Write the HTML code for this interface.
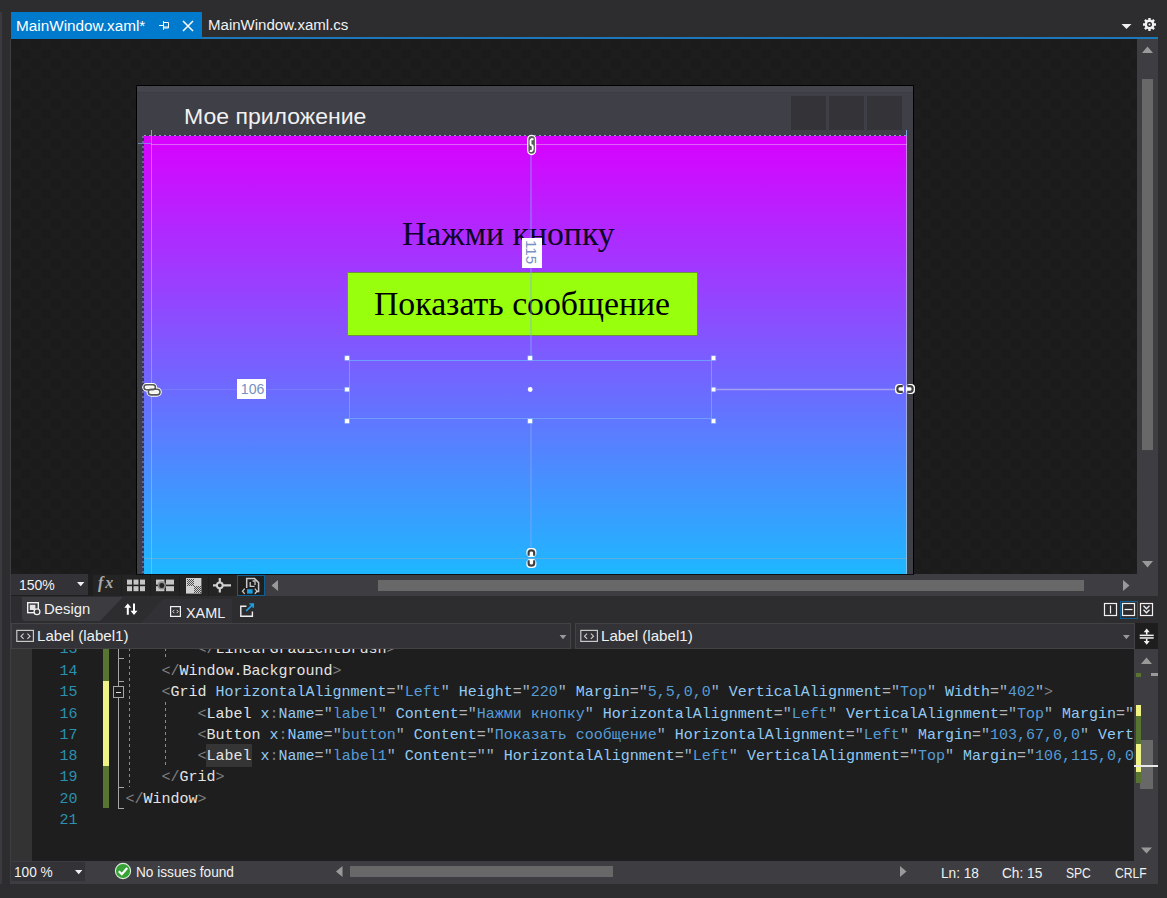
<!DOCTYPE html>
<html lang="ru">
<head>
<meta charset="utf-8">
<title>MainWindow.xaml</title>
<style>
html,body{margin:0;padding:0;}
body{position:relative;width:1167px;height:898px;overflow:hidden;background:#2d2d30;
  font-family:"Liberation Sans",sans-serif;font-size:15px;color:#f1f1f1;}
.a{position:absolute;}
.t{position:absolute;white-space:nowrap;line-height:20px;height:20px;}
svg{position:absolute;overflow:visible;}
/* ---------- tab strip ---------- */
#tab1{left:11px;top:12px;width:191px;height:27px;background:#007acc;}
#tabline{left:11px;top:37px;width:1147px;height:2px;background:#1b78ba;}
/* ---------- designer ---------- */
#design{left:11px;top:39px;width:1126px;height:535px;overflow:hidden;background-color:#1b1b1b;
  background-image:linear-gradient(45deg,#1d1d1d 25%,transparent 25%,transparent 75%,#1d1d1d 75%),
                   linear-gradient(45deg,#1d1d1d 25%,transparent 25%,transparent 75%,#1d1d1d 75%);
  background-size:20px 20px;background-position:0 0,10px 10px;}
#win{left:125px;top:46px;width:778px;height:520px;background:#3f3f48;border:1px solid #000;box-sizing:border-box;}
#grad{left:132.500px;top:97px;width:763.500px;height:440px;background:linear-gradient(to bottom,#d901ff 0px,#1eb7ff 438px);}
.cap{position:absolute;top:57px;width:35px;height:34px;background:#333338;}
.sb{background:#3e3e42;}
.th{background:#686868;}
/* ---------- editor ---------- */
#editor{left:11px;top:649px;width:1123px;height:212px;background:#1e1e1e;overflow:hidden;}
#code{font-family:"Liberation Mono",monospace;font-size:15px;color:#dcdcdc;}
.ln{position:absolute;left:114.500px;white-space:pre;height:21px;line-height:21px;}
.num{position:absolute;left:20px;width:46.400px;text-align:right;color:#2b91af;height:21px;line-height:21px;}
.d{color:#808080}.e{color:#e4e4e4}.n{color:#92caf4}.v{color:#569cd6}.q{color:#9fb6cc}.p{color:#b4b4b4}
.combo{position:absolute;top:623px;height:26px;background:#333337;border:1px solid #434346;box-sizing:border-box;}
</style>
</head>
<body>
<!-- TAB STRIP -->
<div class="a" id="tabline"></div>
<div class="a" id="tab1"></div>
<div class="t" id="tx1" style="left:15.71px;top:16.0px;color:#fff;font-size:15.5px;transform:scaleX(0.9876);transform-origin:0 50%;">MainWindow.xaml*</div>
<div class="t" id="tx2" style="left:207.55px;top:15.0px;font-size:15.5px;transform:scaleX(0.9699);transform-origin:0 50%;">MainWindow.xaml.cs</div>
<svg id="pin" style="left:158px;top:20px" width="12" height="11" viewBox="0 0 12 11"><path d="M1 5.5H5M5.5 1V10M6 2.5H10.5V8H6M6 7H10.5" fill="none" stroke="#fff" stroke-width="1"/></svg>
<svg id="cls" style="left:182px;top:21px" width="12" height="10" viewBox="0 0 12 10"><path d="M1 0L11 10M11 0L1 10" fill="none" stroke="#fff" stroke-width="1.5"/></svg>
<svg id="dd" style="left:1121px;top:24px" width="11" height="6" viewBox="0 0 11 6"><path d="M0.5 0H10.5L5.5 5Z" fill="#f1f1f1"/></svg>
<svg id="gear" style="left:1143px;top:18px" width="13" height="13" viewBox="0 0 13 13"><circle cx="6.5" cy="6.5" r="3.6" fill="none" stroke="#f1f1f1" stroke-width="2.6"/><g stroke="#f1f1f1" stroke-width="2.4"><path d="M6.5 0V13M0 6.5H13M1.9 1.9L11.1 11.1M11.1 1.9L1.9 11.1" stroke-dasharray="2.2 8.6 2.2"/></g><circle cx="6.5" cy="6.5" r="2.4" fill="#2d2d30"/><circle cx="6.5" cy="6.5" r="1" fill="#f1f1f1"/></svg>

<!-- DESIGNER -->
<div class="a" id="design">
  <div class="a" id="win"><div class="a" style="left:0;top:0;width:776px;height:6px;background:#44444c;"></div><div class="a" style="left:0;top:6px;width:776px;height:1px;background:#3b3b43;"></div></div>
  <div class="cap" style="left:780px"></div><div class="cap" style="left:818px"></div><div class="cap" style="left:856px"></div>
  <div class="t" id="title" style="left:173.100px;top:65px;font-size:22.500px;line-height:26px;height:26px;transform:scaleX(1.023);transform-origin:0 50%;">Мое приложение</div>
  <div class="a" id="grad"></div>
  <div class="t" id="lbl" style="left:391px;top:173px;font-family:'Liberation Serif',serif;font-size:33.75px;line-height:44px;height:44px;color:#0e0226;">Нажми кнопку</div>
  <div class="a" id="btn" style="left:336px;top:233px;width:351px;height:64px;box-sizing:border-box;background:#98ff0c;border:1px solid #6f8f3c;"></div>
  <div class="t" id="btntx" style="left:363px;top:243px;font-family:'Liberation Serif',serif;font-size:33.75px;line-height:44px;height:44px;color:#000;">Показать сообщение</div>
  <svg id="ad" style="left:0;top:0" width="1126" height="535" viewBox="11 39 1126 535" shape-rendering="crispEdges">
    <!-- dotted window content border -->
    <path d="M144 135.500H907" stroke="#1c1c78" stroke-opacity=".25" stroke-width="1" fill="none"/>
    <path d="M144 135.500H907" stroke="#cdbcff" stroke-opacity=".7" stroke-width="1" stroke-dasharray="2 3" fill="none"/>
    <path d="M143 136V574" stroke="#1c1c78" stroke-opacity=".5" stroke-width="1" fill="none" shape-rendering="auto"/>
    <path d="M143 136V574" stroke="#cdbcff" stroke-opacity=".7" stroke-width="1" stroke-dasharray="2 3" fill="none" shape-rendering="auto"/>
    <!-- grid rails -->
    <path d="M151.5 136V574" stroke="#c4c4c4" stroke-opacity=".5" stroke-width="1" fill="none"/>
    <path d="M906.5 136V574" stroke="#c8c8d0" stroke-opacity=".62" stroke-width="1" fill="none"/>
    <path d="M151 144.5H907" stroke="#e8e8e8" stroke-opacity=".42" stroke-width="1" fill="none"/>
    <path d="M144 558.5H907" stroke="#b0b0b0" stroke-opacity=".4" stroke-width="1" fill="none"/>
    <path d="M138 143.5H151" stroke="#7fa4e4" stroke-opacity=".7" stroke-width="1" fill="none"/><path d="M151.500 130V136M906.500 130V136" stroke="#7fa4e4" stroke-width="1" fill="none"/>
    <!-- margin lines -->
    <path d="M531 155V356M531 422V548" stroke="#86a8ff" stroke-opacity=".55" stroke-width="1.4" fill="none" shape-rendering="auto"/>
    <path d="M162 389.5H345" stroke="#9db8ff" stroke-opacity=".22" stroke-width="1" fill="none"/>
    <path d="M716 389.5H895" stroke="#d0d0e0" stroke-opacity=".55" stroke-width="1.5" fill="none" shape-rendering="auto"/>
    <!-- selection rect -->
    <rect x="349.5" y="360.5" width="362" height="58" fill="none" stroke="#6f9cff" stroke-width="1"/>
    <g fill="#ffffff" stroke="#7aa2f0" stroke-width="0.6" shape-rendering="auto">
      <rect x="344.8" y="355.8" width="4.6" height="4.6"/><rect x="527.8" y="355.8" width="4.6" height="4.6"/><rect x="711.2" y="355.8" width="4.6" height="4.6"/>
      <rect x="344.8" y="387.2" width="4.6" height="4.6"/><rect x="711.2" y="387.2" width="4.6" height="4.6"/>
      <rect x="344.8" y="418.8" width="4.6" height="4.6"/><rect x="527.8" y="418.8" width="4.6" height="4.6"/><rect x="711.2" y="418.8" width="4.6" height="4.6"/>
      <circle cx="530.2" cy="389.5" r="2.4" stroke="none"/>
    </g>
    <!-- value boxes -->
    <rect x="237" y="379" width="29" height="20" fill="#ffffff"/>
    <rect x="522" y="238" width="20" height="30" fill="#ffffff"/>
    <!-- chain icons -->
    <g shape-rendering="auto" fill="none">
      <g id="chainL">
        <rect x="144" y="384.700" width="11.400" height="5" rx="2.500" stroke="#ffffff" stroke-width="3.600" fill="#f4f4f0"/>
        <rect x="148.300" y="389.200" width="11.700" height="5.700" rx="2.850" stroke="#ffffff" stroke-width="3.600" fill="#f4f4f0"/>
        <rect x="144" y="384.700" width="11.400" height="5" rx="2.500" stroke="#585858" stroke-width="1.600"/>
        <rect x="148.300" y="389.200" width="11.700" height="5.700" rx="2.850" stroke="#585858" stroke-width="1.600"/>
      </g>
      <g id="chainT">
        <rect x="527.700" y="135.300" width="7.800" height="19.200" rx="3.900" stroke="#ffffff" stroke-width="1.300" fill="#595959"/>
        <path d="M533.400 139.800Q531.200 138 530.500 140.600V144Q530.500 145.300 531.600 145.300Q532.700 145.300 532.700 146.600V149.600Q532 152 529.900 150.600" stroke="#ffffff" stroke-width="1.900"/>
      </g>
      <g id="chainR">
        <rect x="896" y="385" width="7" height="8" rx="2.800" stroke="#ffffff" stroke-width="2" fill="#ffffff"/>
        <path d="M902.800 386.200H899.800Q897.300 386.200 897.300 389Q897.300 391.800 899.800 391.800H902.800" stroke="#404040" stroke-width="2.200"/>
        <rect x="907" y="385" width="7" height="8" rx="2.800" stroke="#ffffff" stroke-width="2" fill="#ffffff"/>
        <path d="M907.200 386.200H910.200Q912.700 386.200 912.700 389Q912.700 391.800 910.200 391.800H907.200" stroke="#404040" stroke-width="2.200"/>
      </g>
      <g id="chainB">
        <rect x="527.400" y="549" width="8" height="7" rx="2.800" stroke="#ffffff" stroke-width="2" fill="#ffffff"/>
        <path d="M528.600 555.800V552.800Q528.600 550.300 531.400 550.300Q534.200 550.300 534.200 552.800V555.800" stroke="#404040" stroke-width="2.200"/>
        <rect x="527.400" y="560" width="8" height="7" rx="2.800" stroke="#ffffff" stroke-width="2" fill="#ffffff"/>
        <path d="M528.600 560.200V563.200Q528.600 565.700 531.400 565.700Q534.200 565.700 534.200 563.200V560.200" stroke="#404040" stroke-width="2.200"/>
      </g>
    </g>
  </svg>
  <div class="t" id="v106" style="left:227.5px;top:340px;width:29px;text-align:center;color:#7890c4;font-size:15px;transform:scaleX(0.9417);transform-origin:0 50%;">106</div>
  <div class="t" id="v115" style="left:505.200px;top:203px;width:30px;text-align:center;color:#7890c4;font-size:15.500px;transform:rotate(90deg) scaleX(0.98);transform-origin:50% 50%;">115</div>
</div>
<!-- designer scrollbars -->
<div class="a sb" style="left:1137px;top:39px;width:21px;height:557px;"></div>
<div class="a th" style="left:1142px;top:79px;width:11px;height:371px;"></div>
<div class="a" style="left:11px;top:574px;width:1147px;height:22px;background:#1e1e1e;"></div>
<div class="a sb" style="left:265px;top:574px;width:893px;height:22px;"></div>
<div class="a th" style="left:378px;top:580px;width:706px;height:11px;"></div>
<svg style="left:1137px;top:39px" width="21" height="557" viewBox="1137 39 21 557">
  <path d="M1142 53H1153L1147.5 46.5Z M1142 561H1153L1147.5 567.5Z" fill="#999999"/>
</svg>
<svg style="left:265px;top:574px" width="872" height="22" viewBox="265 574 872 22">
  <path d="M278 580V591L271.5 585.5Z M1123 580V591L1129.5 585.5Z" fill="#999999"/>
</svg>
<div class="a" style="left:136px;top:574px;width:778px;height:1px;background:#0c1014;"></div>
<!-- designer toolbar -->
<div class="a" style="left:11px;top:574px;width:77px;height:21px;background:#333337;"></div>
<div class="t" id="z150" style="left:18.86px;top:575.0px;font-size:15px;transform:scaleX(0.9329);transform-origin:0 50%;">150%</div>
<svg style="left:77px;top:582px" width="8" height="5" viewBox="0 0 8 5"><path d="M0 0H7.4L3.7 4.2Z" fill="#f1f1f1"/></svg>
<div class="a" style="left:93px;top:575px;width:28px;height:21px;background:#242425;"></div>
<div class="a" style="left:122px;top:575px;width:28px;height:21px;background:#242425;"></div>
<div class="a" style="left:151px;top:575px;width:28px;height:21px;background:#242425;"></div>
<div class="a" style="left:180px;top:575px;width:28px;height:21px;background:#242425;"></div>
<div class="a" style="left:209px;top:575px;width:28px;height:21px;background:#242425;"></div>
<div class="a" style="left:237px;top:575px;width:28px;height:21px;background:#1f1f20;border:1px solid #0f5f95;box-sizing:border-box;"></div>
<div class="t" id="fx" style="left:98px;top:572px;font-family:'Liberation Serif',serif;font-style:italic;font-weight:bold;font-size:16px;letter-spacing:2px;line-height:22px;height:22px;color:#aaaaaa;">fx</div>
<svg id="tbicons" style="left:120px;top:574px" width="150" height="22" viewBox="120 574 150 22">
  <g fill="#c6c6c6">
    <rect x="127" y="579.6" width="5" height="5"/><rect x="133.5" y="579.6" width="5" height="5"/><rect x="140" y="579.6" width="5" height="5"/>
    <rect x="127" y="586.2" width="5" height="5"/><rect x="133.5" y="586.2" width="5" height="5"/><rect x="140" y="586.2" width="5" height="5"/>
    <rect x="156" y="579.6" width="8.4" height="5"/><rect x="166" y="579.6" width="8" height="5"/>
    <rect x="156" y="586.2" width="8.4" height="5"/><rect x="166" y="586.2" width="8" height="5"/>
    <rect x="186" y="578" width="15.4" height="15.6" fill="#d2d2d2"/>
  </g>
  <circle cx="161.800" cy="585.400" r="3.300" fill="#242425" stroke="#8a8a8a" stroke-width="1.600"/>
  <g stroke="#505050" stroke-width="1" stroke-dasharray="1 1" fill="none" shape-rendering="crispEdges"><path d="M187 579.5H194M188 580.5H194M187 581.5H194M188 582.5H194M187 583.5H194M188 584.5H194M187 585.5H194M194 586.5H201M195 587.5H201M194 588.5H201M195 589.5H201M194 590.5H201M195 591.5H201M194 592.5H201"/></g>
  <g stroke="#d0d0d0" stroke-width="2.2" fill="none"><path d="M213 585.3H231M219.800 578V592.6"/></g>
  <circle cx="219.800" cy="585.3" r="2.9" fill="#242425" stroke="#d0d0d0" stroke-width="2"/>
  <g stroke="#c8c8c8" stroke-width="1.5" fill="none">
    <path d="M246.7 588V578.6H254.500L258.600 582.6V591.6H256"/>
    <path d="M250.200 582V586.400H254.600M252.600 581H255V585" stroke-width="1.3"/>
    <path d="M244.700 588.6L242.500 591.2L244.700 593.800M254.800 588.6L257 591.2L254.800 593.800" stroke-width="1.3"/>
  </g>
  <rect x="247" y="589.2" width="5.6" height="4.4" fill="#1ba1e2"/>
</svg>
<!-- design/xaml tab row -->
<svg id="tabrow" style="left:11px;top:596px" width="1147" height="27" viewBox="11 596 1147 27">
  <path d="M22 597H123L100 621H25Q22 621 22 618Z" fill="#3b3b40"/>
  <path d="M163 599H232V623H141Z" fill="#323236"/>
  <g fill="none" stroke="#f1f1f1" stroke-width="1.4">
    <rect x="27.700" y="602.700" width="10.600" height="10"/>
    <rect x="170.600" y="606.6" width="9.800" height="9.800" stroke-width="1.2"/>
    <path d="M246.400 606.200H240.800V616.200H252.400V611.400" stroke-width="1.4"/>
    <rect x="1104.500" y="603.500" width="12" height="12" stroke-width="1.2"/><path d="M1110.500 605.500V613.500" stroke-width="1.2"/>
    <rect x="1122.500" y="603.500" width="12" height="12" stroke-width="1.2"/><path d="M1124.500 609.500H1132.500" stroke-width="1.2"/>
    <rect x="1140.500" y="603.500" width="12" height="12" stroke-width="1.2"/><path d="M1143.500 605.800L1146.500 608.800L1149.500 605.800M1143.500 609.800L1146.500 612.800L1149.500 609.800" stroke-width="1.300"/>
  </g>
  <rect x="1120.500" y="601.500" width="17" height="17" fill="none" stroke="#0f5f95" stroke-width="1"/>
  <rect x="29.800" y="604.800" width="5.600" height="5.200" fill="#e4e4e4"/>
  <circle cx="37" cy="611.700" r="2.900" fill="#3b3b40" stroke="#f1f1f1" stroke-width="1.300"/>
  <path d="M127.800 603.4L124.300 607.700H126.800V614.800H128.800V607.700H131.300Z M134 615L130.500 610.700H133V603.600H135V610.700H137.500Z" fill="#ffffff"/>
  <path d="M174.300 609.900L172.800 611.500L174.300 613.100M176.700 609.900L178.200 611.500L176.700 613.100" fill="none" stroke="#f1f1f1" stroke-width="0.9"/>
  <path d="M246.200 611L252.600 604.600M249.400 604H253.200V607.800" fill="none" stroke="#1ba1e2" stroke-width="1.700"/>
</svg>
<div class="t" id="tdesign" style="left:44.08px;top:599.0px;font-size:15.5px;transform:scaleX(0.9574);transform-origin:0 50%;">Design</div>
<div class="t" id="txaml" style="left:185.98px;top:603.0px;font-size:15px;transform:scaleX(0.96);transform-origin:0 50%;">XAML</div>
<!-- combo boxes -->
<div class="combo" style="left:11px;width:560px;"></div>
<div class="combo" style="left:575px;width:560px;"></div>
<div class="a" style="left:1135px;top:623px;width:23px;height:26px;background:#1e1e1e;"></div>
<svg id="comboic" style="left:11px;top:623px" width="1147" height="26" viewBox="11 623 1147 26">
  <g fill="none" stroke="#c8c8c8" stroke-width="1.2">
    <rect x="16.800" y="630.400" width="16.600" height="11"/><path d="M23.600 633.600L21 636.200L23.600 638.800M27.400 633.600L30 636.200L27.400 638.800"/>
    <rect x="580.800" y="630.400" width="16.600" height="11"/><path d="M587.100 633.600L584.500 636.200L587.100 638.800M590.900 633.600L593.500 636.200L590.900 638.800"/>
  </g>
  <path d="M559.600 635H566.400L563 639.200Z M1123 635H1129.800L1126.400 639.200Z" fill="#999999"/>
  <g fill="#f1f1f1"><rect x="1139.700" y="634.600" width="14" height="1.500"/><rect x="1139.700" y="637.200" width="14" height="1.500"/>
  <path d="M1146.700 628.500L1149.700 632.200H1147.500V634.600H1145.900V632.200H1143.700Z M1146.700 644.800L1149.700 641.100H1147.500V638.700H1145.900V641.100H1143.700Z"/></g>
</svg>
<div class="t" id="cb1" style="left:36.52px;top:626.0px;font-size:15px;transform:scaleX(1.0073);transform-origin:0 50%;">Label (label1)</div>
<div class="t" id="cb2" style="left:600.66px;top:626.0px;font-size:15px;transform:scaleX(1.009);transform-origin:0 50%;">Label (label1)</div>
<!-- EDITOR -->
<div class="a" id="editor">
<div class="a" style="left:0;top:0;width:21px;height:212px;background:#333333;"></div>
<div class="a" style="left:92px;top:0;width:6px;height:32.300px;background:#577430;"></div>
<div class="a" style="left:92px;top:32.300px;width:6px;height:85px;background:#eff284;"></div>
<div class="a" style="left:92px;top:117.300px;width:6px;height:42px;background:#577430;"></div>
<svg id="outl" style="left:0;top:0" width="200" height="212" viewBox="11 649 200 212" shape-rendering="crispEdges">
  <path d="M118.500 648V808.500H124M118.500 658.500H124M118.500 681.500H124M118.500 787.500H124" fill="none" stroke="#a5a5a5" stroke-width="1"/>
  <rect x="113.500" y="686.500" width="10" height="11" fill="#1e1e1e" stroke="#a5a5a5" stroke-width="1"/>
  <path d="M116 692.500H121" stroke="#e0e0e0" stroke-width="1"/>
  <path d="M129.500 648V787M165.500 648V660M165.500 702V766" fill="none" stroke="#8a8a8a" stroke-width="1" stroke-dasharray="3 3"/>
</svg>
<div class="a" style="left:195px;top:95px;width:45.500px;height:23px;background:#353535;"></div>
<div id="code">
<div class="num" style="top:-9.60px">13</div><div class="ln" style="top:-9.60px">        <span class="d">&lt;/</span><span class="e">LinearGradientBrush</span><span class="d">&gt;</span></div>
<div class="num" style="top:11.73px">14</div><div class="ln" style="top:11.73px">    <span class="d">&lt;/</span><span class="e">Window.Background</span><span class="d">&gt;</span></div>
<div class="num" style="top:33.07px">15</div><div class="ln" style="top:33.07px">    <span class="d">&lt;</span><span class="e">Grid</span> <span class="n">HorizontalAlignment</span><span class="p">=</span><span class="q">"</span><span class="v">Left</span><span class="q">"</span> <span class="n">Height</span><span class="p">=</span><span class="q">"</span><span class="v">220</span><span class="q">"</span> <span class="n">Margin</span><span class="p">=</span><span class="q">"</span><span class="v">5,5,0,0</span><span class="q">"</span> <span class="n">VerticalAlignment</span><span class="p">=</span><span class="q">"</span><span class="v">Top</span><span class="q">"</span> <span class="n">Width</span><span class="p">=</span><span class="q">"</span><span class="v">402</span><span class="q">"</span><span class="d">&gt;</span></div>
<div class="num" style="top:55.10px">16</div><div class="ln" style="top:55.10px">        <span class="d">&lt;</span><span class="e">Label</span> <span class="n">x</span><span class="d">:</span><span class="n">Name</span><span class="p">=</span><span class="q">"</span><span class="v">label</span><span class="q">"</span> <span class="n">Content</span><span class="p">=</span><span class="q">"</span><span class="v">Нажми кнопку</span><span class="q">"</span> <span class="n">HorizontalAlignment</span><span class="p">=</span><span class="q">"</span><span class="v">Left</span><span class="q">"</span> <span class="n">VerticalAlignment</span><span class="p">=</span><span class="q">"</span><span class="v">Top</span><span class="q">"</span> <span class="n">Margin</span><span class="p">=</span><span class="q">"</span></div>
<div class="num" style="top:75.73px">17</div><div class="ln" style="top:75.73px">        <span class="d">&lt;</span><span class="e">Button</span> <span class="n">x</span><span class="d">:</span><span class="n">Name</span><span class="p">=</span><span class="q">"</span><span class="v">button</span><span class="q">"</span> <span class="n">Content</span><span class="p">=</span><span class="q">"</span><span class="v">Показать сообщение</span><span class="q">"</span> <span class="n">HorizontalAlignment</span><span class="p">=</span><span class="q">"</span><span class="v">Left</span><span class="q">"</span> <span class="n">Margin</span><span class="p">=</span><span class="q">"</span><span class="v">103,67,0,0</span><span class="q">"</span> <span class="n">Vert</span></div>
<div class="num" style="top:97.07px">18</div><div class="ln" style="top:97.07px">        <span class="d">&lt;</span><span class="e">Label</span> <span class="n">x</span><span class="d">:</span><span class="n">Name</span><span class="p">=</span><span class="q">"</span><span class="v">label1</span><span class="q">"</span> <span class="n">Content</span><span class="p">=</span><span class="q">"</span><span class="q">"</span> <span class="n">HorizontalAlignment</span><span class="p">=</span><span class="q">"</span><span class="v">Left</span><span class="q">"</span> <span class="n">VerticalAlignment</span><span class="p">=</span><span class="q">"</span><span class="v">Top</span><span class="q">"</span> <span class="n">Margin</span><span class="p">=</span><span class="q">"</span><span class="v">106,115,0,0</span></div>
<div class="num" style="top:118.40px">19</div><div class="ln" style="top:118.40px">    <span class="d">&lt;/</span><span class="e">Grid</span><span class="d">&gt;</span></div>
<div class="num" style="top:139.73px">20</div><div class="ln" style="top:139.73px"><span class="d">&lt;/</span><span class="e">Window</span><span class="d">&gt;</span></div>
<div class="num" style="top:161.07px">21</div><div class="ln" style="top:161.07px"></div>
</div>
</div>
<!-- editor scrollbar -->
<div class="a sb" style="left:1134px;top:649px;width:24px;height:212px;"></div>
<div class="a th" style="left:1140px;top:740px;width:13px;height:49px;"></div>
<div class="a" style="left:1136px;top:673px;width:5px;height:4px;background:#577430;"></div>
<div class="a" style="left:1151px;top:673px;width:7px;height:3px;background:#9a9a9a;"></div>
<div class="a" style="left:1136px;top:705px;width:5px;height:11px;background:#eff284;"></div>
<div class="a" style="left:1136px;top:716px;width:5px;height:28px;background:#577430;"></div>
<div class="a" style="left:1136px;top:744px;width:5px;height:28px;background:#eff284;"></div>
<div class="a" style="left:1136px;top:772px;width:5px;height:11px;background:#577430;"></div>
<div class="a" style="left:1134px;top:765px;width:24px;height:2px;background:#e8e8e8;"></div>
<svg style="left:1134px;top:649px" width="24" height="212" viewBox="1134 649 24 212">
  <path d="M1141 664H1152L1146.500 657.500Z M1141 847.500H1152L1146.500 853.500Z" fill="#999999"/>
</svg>
<!-- status bar -->
<div class="a" style="left:11px;top:861px;width:1147px;height:23px;background:#3e3e42;"></div>
<div class="a" style="left:11px;top:862px;width:74px;height:19px;background:#333337;"></div>
<div class="t" id="z100" style="left:14.34px;top:862.0px;font-size:14px;transform:scaleX(0.9769);transform-origin:0 50%;">100 %</div>
<svg style="left:75px;top:870px" width="8" height="5" viewBox="0 0 8 5"><path d="M0 0H7.400L3.700 4.200Z" fill="#f1f1f1"/></svg>
<svg id="okic" style="left:114px;top:862px" width="18" height="18" viewBox="0 0 18 18"><circle cx="9" cy="9" r="7.600" fill="#37a337" stroke="#d8ecd8" stroke-width="1.100"/><path d="M4.800 9.300L7.800 12.200L13.200 6" fill="none" stroke="#ffffff" stroke-width="2.200"/></svg>
<div class="t" id="noiss" style="left:135.57px;top:862.0px;font-size:14px;transform:scaleX(0.9758);transform-origin:0 50%;">No issues found</div>
<div class="a th" style="left:350px;top:866px;width:263px;height:11px;"></div>
<svg style="left:330px;top:861px" width="600" height="23" viewBox="330 861 600 23"><path d="M342.500 866V877L336 871.500Z M900 866V877L906.500 871.500Z" fill="#999999"/></svg>
<div class="t" id="sln" style="left:940.81px;top:863.0px;font-size:14px;transform:scaleX(0.9737);transform-origin:0 50%;">Ln: 18</div>
<div class="t" id="sch" style="left:1001.93px;top:863.0px;font-size:14px;transform:scaleX(0.975);transform-origin:0 50%;">Ch: 15</div>
<div class="t" id="sspc" style="left:1065.54px;top:863.0px;font-size:14px;transform:scaleX(0.863);transform-origin:0 50%;">SPC</div>
<div class="t" id="scrlf" style="left:1114.52px;top:863.0px;font-size:14px;transform:scaleX(0.8686);transform-origin:0 50%;">CRLF</div>
<!-- left chrome strip -->
<div class="a" style="left:0;top:12px;width:2px;height:872px;background:#3a3a3f;"></div>
<div class="a" style="left:10px;top:39px;width:1px;height:845px;background:#3e3e42;"></div>
</body>
</html>
